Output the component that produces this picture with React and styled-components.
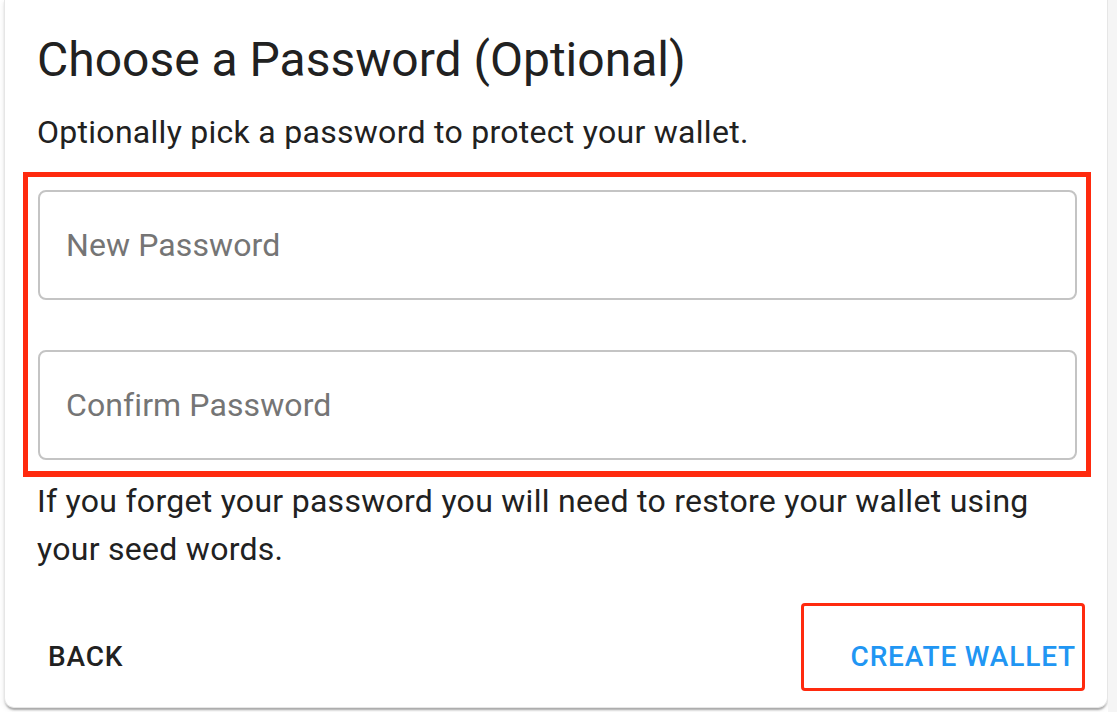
import React from 'react'
import styled, { createGlobalStyle } from 'styled-components'

const GlobalStyle = createGlobalStyle`
    html, body {
        margin: 0;
        padding: 0;
        background: #ffffff;
        font-family: Roboto, "Noto Sans", "Liberation Sans", sans-serif;
    }
    * {
        box-sizing: border-box;
    }
`;

const Page = styled.div`
    display: flex;
    width: 1117px;
    height: 712px;
    padding-left: 4px;
    overflow: hidden;
`;

const Card = styled.div`
    flex: 1;
    height: 708px;
    background: #ffffff;
    border: 1px solid #e6e6e6;
    border-top: none;
    border-radius: 0 0 10px 10px;
    box-shadow: 0 4px 2px -2px rgba(0, 0, 0, 0.2), 0 2px 2px 0 rgba(0, 0, 0, 0.12), 0 2px 6px 0 rgba(0, 0, 0, 0.08);
    display: flex;
    flex-direction: column;
`;

const Gutter = styled.div`
    width: 9px;
    height: 100%;
    background: #f5f5f5;
`;

const Content = styled.div`
    padding: 28px 30px 30px 32px;
`;

const Title = styled.h1`
    margin: 0 0 16px;
    font-size: 48px;
    font-weight: 400;
    line-height: 64px;
    color: #212121;
`;

const Text = styled.p`
    margin: 0;
    font-size: 32px;
    font-weight: 400;
    line-height: 48px;
    color: #212121;
    letter-spacing: 0.28px;
`;

const Highlight = styled.div`
    margin: 16px -14px 0 -14px;
    border: 5px solid #ff2a0e;
    border-bottom-width: 6px;
    padding: 13px 9px 11px 10px;
    display: flex;
    flex-direction: column;
    gap: 50px;
`;

const Field = styled.input`
    display: block;
    width: 100%;
    height: 110px;
    border: 2px solid #c4c4c4;
    border-radius: 8px;
    padding: 0 26px;
    font-family: inherit;
    font-size: 32px;
    color: #212121;
    background: #ffffff;
    outline: none;
    letter-spacing: 0.1px;

    &::placeholder {
        color: #757575;
        opacity: 1;
    }
`;

const Actions = styled.div`
    position: relative;
    display: flex;
    justify-content: space-between;
    align-items: center;
    padding: 17px 15px 14px 27px;
`;

const Button = styled.button`
    height: 72px;
    padding: 0 16px;
    border: none;
    background: transparent;
    font-family: inherit;
    font-size: 28px;
    font-weight: 500;
    letter-spacing: 0.85px;
    text-transform: uppercase;
    color: ${(p) => (p.primary ? '#2196f3' : '#212121')};
    cursor: pointer;
`;

const Marker = styled.span`
    position: absolute;
    top: 0;
    right: 22px;
    width: 284px;
    height: 88px;
    border: 3px solid #ff2a0e;
    border-radius: 4px;
    pointer-events: none;
`;

const App = () => {
    return (
        <>
            <GlobalStyle />
            <Page>
                <Card>
                    <Content>
                        <Title>Choose a Password (Optional)</Title>
                        <Text>Optionally pick a password to protect your wallet.</Text>
                        <Highlight>
                            <Field type="password" placeholder="New Password" />
                            <Field type="password" placeholder="Confirm Password" />
                        </Highlight>
                        <Text>If you forget your password you will need to restore your wallet using your seed words.</Text>
                    </Content>
                    <Actions>
                        <Button>Back</Button>
                        <Button primary>Create Wallet</Button>
                        <Marker />
                    </Actions>
                </Card>
                <Gutter />
            </Page>
        </>
    )
}

export default App
